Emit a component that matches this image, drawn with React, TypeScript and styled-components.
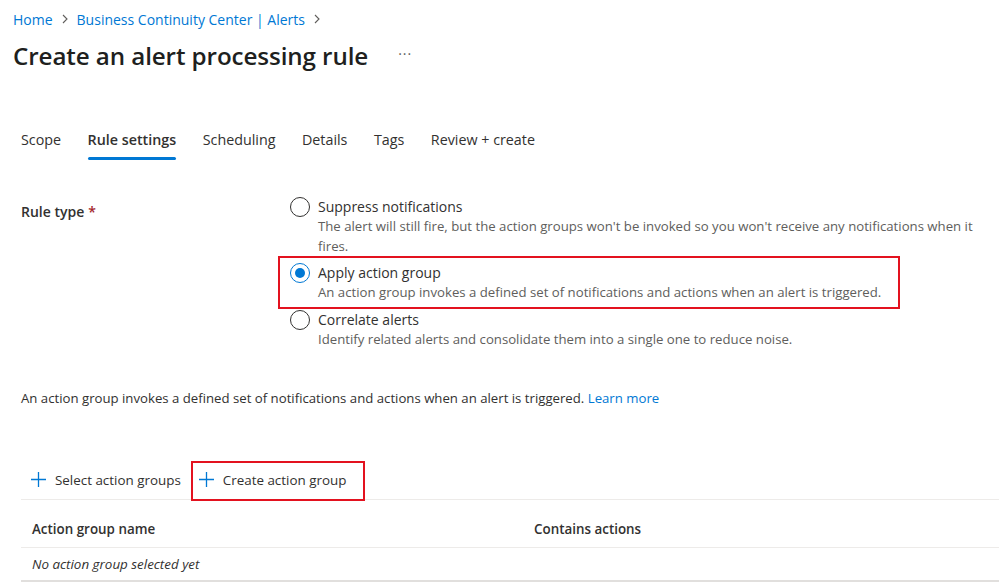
import React from "react";
import styled, { createGlobalStyle, css } from "styled-components";

const Global = createGlobalStyle`
  html, body { margin: 0; padding: 0; background: #fff; }
  body {
    font-family: "Open Sans", "Noto Sans", sans-serif;
    color: #323130;
    font-size: 13px;
  }
  * { box-sizing: border-box; }
`;

const Page = styled.div`
  width: 999px;
  height: 584px;
  overflow: hidden;
  padding: 9px 0 0 0;
`;

const Header = styled.div`
  padding-left: 13px;
`;

const Breadcrumb = styled.nav`
  display: flex;
  align-items: center;
  gap: 6px;
  height: 20px;
  font-size: 14px;
  color: #0078d4;
`;

const Crumb = styled.a`
  color: #0078d4;
  text-decoration: none;
`;

const Chevron = styled.span`
  display: inline-flex;
  color: #605e5c;
`;

const TitleRow = styled.div`
  display: flex;
  align-items: center;
  margin-top: 10px;
  height: 32px;
`;

const Title = styled.h1`
  margin: 0;
  font-size: 24.2px;
  font-weight: 600;
  color: #201f1e;
  letter-spacing: -0.1px;
`;

const More = styled.span`
  margin-left: 30px;
  font-size: 14px;
  color: #605e5c;
  letter-spacing: 1px;
  position: relative;
  top: -2px;
`;

const Content = styled.div`
  padding-left: 21px;
`;

const Tabs = styled.div`
  display: flex;
  gap: 26.5px;
  margin-top: 53px;
`;

const Tab = styled.div<{ $active?: boolean }>`
  position: relative;
  height: 36px;
  line-height: 32px;
  font-size: 14.3px;
  color: #323130;
  ${(p) =>
    p.$active &&
    css`
      font-weight: 600;
      &::after {
        content: "";
        position: absolute;
        left: 0;
        right: 0;
        bottom: 0;
        height: 3px;
        border-radius: 2px;
        background: #0078d4;
      }
    `}
`;

const FieldRow = styled.div`
  display: grid;
  grid-template-columns: 269px 1fr;
  margin-top: 37px;
`;

const FieldLabel = styled.div`
  font-size: 14px;
  font-weight: 600;
  line-height: 20px;
  padding-top: 5px;
`;

const Required = styled.span`
  color: #a4262c;
  margin-left: 4px;
`;

const RadioGroup = styled.div`
  display: flex;
  flex-direction: column;
  gap: 7px;
  padding-right: 20px;
`;

const Option = styled.div<{ $highlight?: boolean }>`
  position: relative;
  display: grid;
  grid-template-columns: 28px 1fr;
  ${(p) =>
    p.$highlight &&
    css`
      width: fit-content;
      &::before {
        content: "";
        position: absolute;
        top: -7px;
        bottom: -6px;
        left: -12px;
        right: -19px;
        border: 2px solid #e3121f;
        pointer-events: none;
      }
    `}
`;

const Radio = styled.span<{ $checked?: boolean }>`
  width: 20px;
  height: 20px;
  border-radius: 50%;
  border: 1px solid ${(p) => (p.$checked ? "#0078d4" : "#323130")};
  display: flex;
  align-items: center;
  justify-content: center;
  &::after {
    content: "";
    display: ${(p) => (p.$checked ? "block" : "none")};
    width: 10px;
    height: 10px;
    border-radius: 50%;
    background: #0078d4;
  }
`;

const OptionText = styled.div`
  display: flex;
  flex-direction: column;
`;

const OptionLabel = styled.div`
  font-size: 14px;
  line-height: 20px;
  color: #323130;
`;

const OptionDesc = styled.div`
  font-size: 13.2px;
  line-height: 19.5px;
  color: #605e5c;
`;

const Info = styled.p`
  margin: 39px 0 0 0;
  font-size: 13.2px;
  line-height: 20px;
  color: #323130;
`;

const Link = styled.a`
  color: #0078d4;
  text-decoration: none;
`;

const Toolbar = styled.div`
  display: flex;
  align-items: center;
  gap: 2px;
  margin-top: 52px;
  height: 40px;
  border-bottom: 1px solid #edebe9;
`;

const ToolButton = styled.button<{ $highlight?: boolean }>`
  position: relative;
  display: flex;
  align-items: center;
  gap: 9px;
  height: 38px;
  padding: 0 8px;
  margin-left: ${(p) => (p.$highlight ? "0" : "2px")};
  border: none;
  background: none;
  font-family: inherit;
  font-size: 13.4px;
  color: #323130;
  cursor: pointer;
  ${(p) =>
    p.$highlight &&
    css`
      &::before {
        content: "";
        position: absolute;
        top: 0px;
        bottom: -2px;
        left: 0px;
        right: -11px;
        border: 2px solid #e3121f;
        pointer-events: none;
      }
    `}
`;

const Table = styled.div`
  display: flex;
  flex-direction: column;
`;

const TableRow = styled.div<{ $header?: boolean }>`
  display: grid;
  grid-template-columns: 502px 1fr;
  height: ${(p) => (p.$header ? "48px" : "34px")};
  align-items: center;
  padding-left: 11px;
  padding-top: ${(p) => (p.$header ? "10px" : "0")};
  border-bottom: ${(p) => (p.$header ? "1px solid #edebe9" : "2px solid #e1dfdd")};
  font-size: 13.4px;
  ${(p) =>
    p.$header &&
    css`
      font-weight: 600;
      color: #323130;
    `}
`;

const EmptyCell = styled.div`
  font-style: italic;
  color: #323130;
`;

const ChevronIcon = () => (
  <svg width="12" height="12" viewBox="0 0 12 12">
    <path d="M4 2 L8 6 L4 10" fill="none" stroke="#605e5c" strokeWidth="1.1" />
  </svg>
);

const PlusIcon = () => (
  <svg width="15" height="15" viewBox="0 0 15 15">
    <path d="M7.5 0 V15 M0 7.5 H15" stroke="#0078d4" strokeWidth="1.3" />
  </svg>
);

export default function App() {
  return (
    <Page>
      <Global />
      <Header>
        <Breadcrumb>
          <Crumb>Home</Crumb>
          <Chevron>
            <ChevronIcon />
          </Chevron>
          <Crumb>Business Continuity Center | Alerts</Crumb>
          <Chevron>
            <ChevronIcon />
          </Chevron>
        </Breadcrumb>
        <TitleRow>
          <Title>Create an alert processing rule</Title>
          <More>···</More>
        </TitleRow>
      </Header>
      <Content>
        <Tabs>
          <Tab>Scope</Tab>
          <Tab $active>Rule settings</Tab>
          <Tab>Scheduling</Tab>
          <Tab>Details</Tab>
          <Tab>Tags</Tab>
          <Tab>Review + create</Tab>
        </Tabs>
        <FieldRow>
          <FieldLabel>
            Rule type<Required>*</Required>
          </FieldLabel>
          <RadioGroup>
            <Option>
              <Radio />
              <OptionText>
                <OptionLabel>Suppress notifications</OptionLabel>
                <OptionDesc>
                  The alert will still fire, but the action groups won't be invoked so you won't receive any
                  notifications when it fires.
                </OptionDesc>
              </OptionText>
            </Option>
            <Option $highlight>
              <Radio $checked />
              <OptionText>
                <OptionLabel>Apply action group</OptionLabel>
                <OptionDesc>
                  An action group invokes a defined set of notifications and actions when an alert is triggered.
                </OptionDesc>
              </OptionText>
            </Option>
            <Option>
              <Radio />
              <OptionText>
                <OptionLabel>Correlate alerts</OptionLabel>
                <OptionDesc>Identify related alerts and consolidate them into a single one to reduce noise.</OptionDesc>
              </OptionText>
            </Option>
          </RadioGroup>
        </FieldRow>
        <Info>
          An action group invokes a defined set of notifications and actions when an alert is triggered.{" "}
          <Link>Learn more</Link>
        </Info>
        <Toolbar>
          <ToolButton>
            <PlusIcon />
            Select action groups
          </ToolButton>
          <ToolButton $highlight>
            <PlusIcon />
            Create action group
          </ToolButton>
        </Toolbar>
        <Table>
          <TableRow $header>
            <div>Action group name</div>
            <div>Contains actions</div>
          </TableRow>
          <TableRow>
            <EmptyCell>No action group selected yet</EmptyCell>
            <div />
          </TableRow>
        </Table>
      </Content>
    </Page>
  );
}
